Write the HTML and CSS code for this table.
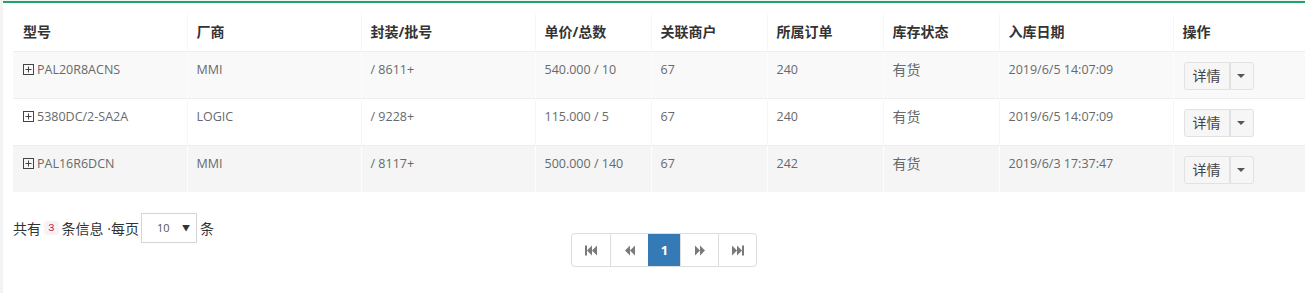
FILE: index.html
```html
<!DOCTYPE html>
<html lang="zh">
<head>
<meta charset="utf-8">
<title>库存列表</title>
<link rel="stylesheet" href="styles.css">
</head>
<body>
<div class="box">
  <table class="grid">
    <colgroup>
      <col class="c-wide"><col class="c-wide"><col class="c-wide">
      <col class="c-narrow"><col class="c-narrow"><col class="c-narrow"><col class="c-narrow">
      <col class="c-wide"><col class="c-op">
    </colgroup>
    <thead>
      <tr>
        <th>型号</th><th>厂商</th><th>封装/批号</th><th>单价/总数</th><th>关联商户</th><th>所属订单</th><th>库存状态</th><th>入库日期</th><th>操作</th>
      </tr>
    </thead>
    <tbody>
      <tr class="odd">
        <td><span class="expand"><svg width="11" height="11" viewBox="0 0 11 11"><rect x="0.5" y="0.5" width="10" height="10" fill="none" stroke="#444" stroke-width="1"/><path d="M2.5 5.5h6M5.5 2.5v6" stroke="#444" stroke-width="1"/></svg></span>PAL20R8ACNS</td>
        <td>MMI</td><td>/ 8611+</td><td>540.000 / 10</td><td>67</td><td>240</td><td class="cjk">有货</td><td>2019/6/5 14:07:09</td>
        <td><div class="btn-group"><span class="btn">详情</span><span class="btn caret-btn"><span class="caret"></span></span></div></td>
      </tr>
      <tr>
        <td><span class="expand"><svg width="11" height="11" viewBox="0 0 11 11"><rect x="0.5" y="0.5" width="10" height="10" fill="none" stroke="#444" stroke-width="1"/><path d="M2.5 5.5h6M5.5 2.5v6" stroke="#444" stroke-width="1"/></svg></span>5380DC/2-SA2A</td>
        <td>LOGIC</td><td>/ 9228+</td><td>115.000 / 5</td><td>67</td><td>240</td><td class="cjk">有货</td><td>2019/6/5 14:07:09</td>
        <td><div class="btn-group"><span class="btn">详情</span><span class="btn caret-btn"><span class="caret"></span></span></div></td>
      </tr>
      <tr class="odd hover">
        <td><span class="expand"><svg width="11" height="11" viewBox="0 0 11 11"><rect x="0.5" y="0.5" width="10" height="10" fill="none" stroke="#444" stroke-width="1"/><path d="M2.5 5.5h6M5.5 2.5v6" stroke="#444" stroke-width="1"/></svg></span>PAL16R6DCN</td>
        <td>MMI</td><td>/ 8117+</td><td>500.000 / 140</td><td>67</td><td>242</td><td class="cjk">有货</td><td>2019/6/3 17:37:47</td>
        <td><div class="btn-group"><span class="btn">详情</span><span class="btn caret-btn"><span class="caret"></span></span></div></td>
      </tr>
    </tbody>
  </table>

  <div class="footer">
    <div class="info">
      <span>共有</span><code class="count">3</code><span>条信息 ·每页</span>
      <span class="select"><span>10</span><span class="sel-arrow">▼</span></span>
      <span>条</span>
    </div>
    <div class="pager">
      <span class="pg"><svg width="14" height="11" viewBox="0 0 14 11"><rect x="1" y="0.5" width="2" height="10" fill="#7a7a7a"/><path d="M3 5.5L8 0.5V10.5Z M8 5.5L13 0.5V10.5Z" fill="#7a7a7a"/></svg></span>
      <span class="pg"><svg width="12" height="11" viewBox="0 0 12 11"><path d="M1 5.5L6 0.5V10.5Z M6 5.5L11 0.5V10.5Z" fill="#7a7a7a"/></svg></span>
      <span class="pg active">1</span>
      <span class="pg"><svg width="12" height="11" viewBox="0 0 12 11"><path d="M11 5.5L6 0.5V10.5Z M6 5.5L1 0.5V10.5Z" fill="#7a7a7a"/></svg></span>
      <span class="pg"><svg width="14" height="11" viewBox="0 0 14 11"><path d="M11 5.5L6 0.5V10.5Z M6 5.5L1 0.5V10.5Z" fill="#7a7a7a"/><rect x="11" y="0.5" width="2" height="10" fill="#7a7a7a"/></svg></span>
    </div>
  </div>
</div>
</body>
</html>
```

FILE: styles.css
```css
html, body {
  margin: 0;
  padding: 0;
}
body {
  background: #f3f3f4;
  font-family: "Open Sans", "Noto Sans CJK SC", sans-serif;
  font-size: 13px;
  color: #676a6c;
  overflow: hidden;
  padding-top: 1px;
}
.box {
  margin-left: 3px;
  width: 1302px;
  background: #fff;
  border-top: 2px solid #19a866;
  padding: 11px 10px 30px 10px;
  min-height: 260px;
}
.grid {
  width: 1302px;
  border-collapse: collapse;
  table-layout: fixed;
}
.c-wide { width: 174px; }
.c-narrow { width: 116px; }
.c-op { width: auto; }
.grid th {
  text-align: left;
  font-weight: bold;
  font-size: 14px;
  color: #333;
  padding: 8px 9px 9px 9px;
  line-height: 20px;
  border-bottom: 1px solid #eeeeee;
  border-left: 1px solid #f6f6f6;
}
.grid td {
  vertical-align: top;
  font-size: 12.5px;
  padding: 8px 9px;
  line-height: 20px;
  border-top: 1px solid #eeeeee;
  border-left: 1px solid #f6f6f6;
  white-space: nowrap;
}
.grid td.cjk {
  font-size: 14px;
}
.grid th:first-child, .grid td:first-child {
  border-left: none;
  padding-left: 10px;
}
.grid tr.odd td {
  background: #f9f9f9;
  border-left-color: #fdfdfd;
}
.grid tr.hover td {
  background: #f5f5f5;
}
.expand {
  display: inline-block;
  width: 11px;
  height: 11px;
  margin-right: 3px;
  vertical-align: -1px;
}
.expand svg { display: block; }
.btn-group {
  display: inline-flex;
  margin-top: 2px;
  margin-left: 1px;
}
.btn {
  display: inline-flex;
  align-items: center;
  justify-content: center;
  height: 28px;
  box-sizing: border-box;
  width: 46px;
  background: #f6f6f6;
  border: 1px solid #e2e2e2;
  color: #444;
  font-size: 14px;
  border-radius: 3px 0 0 3px;
}
.caret-btn {
  width: 24px;
  border-left: none;
  border-radius: 0 3px 3px 0;
  box-shadow: inset 1px 0 0 #e2e2e2;
}
.caret {
  width: 0;
  height: 0;
  border-left: 4px solid transparent;
  border-right: 4px solid transparent;
  border-top: 4px solid #555;
}
.footer {
  display: grid;
}
.info, .pager {
  grid-area: 1 / 1;
}
.info {
  justify-self: start;
  margin-top: 20px;
  display: flex;
  align-items: center;
  color: #333;
  font-size: 14px;
  height: 31px;
}
.count {
  font-family: "Liberation Mono", monospace;
  font-size: 11px;
  color: #c7254e;
  background: #f9f2f4;
  padding: 1px 4px;
  margin: 0 3px 0 3px;
  border-radius: 3px;
}
.select {
  display: inline-flex;
  align-items: center;
  justify-content: space-between;
  box-sizing: border-box;
  width: 56px;
  height: 30px;
  border: 1px solid #d5d5d5;
  margin: 0 3px 0 2px;
  padding: 0 6px 0 15px;
  font-size: 11px;
  color: #555;
}
.sel-arrow {
  font-size: 8px;
  color: #333;
}
.pager {
  justify-self: center;
  margin-top: 41px;
  display: flex;
  border: 1px solid #ddd;
  border-radius: 4px;
  height: 34px;
  box-sizing: border-box;
}
.pg {
  display: flex;
  align-items: center;
  justify-content: center;
  box-sizing: border-box;
  width: 38px;
  border-left: 1px solid #ddd;
  color: #fff;
  font-size: 13px;
}
.pg:first-child {
  border-left: none;
}
.pg.active {
  width: 32px;
  background: #337ab7;
  border-left-color: #337ab7;
  font-weight: bold;
}
.pg svg { display: block; }
```
